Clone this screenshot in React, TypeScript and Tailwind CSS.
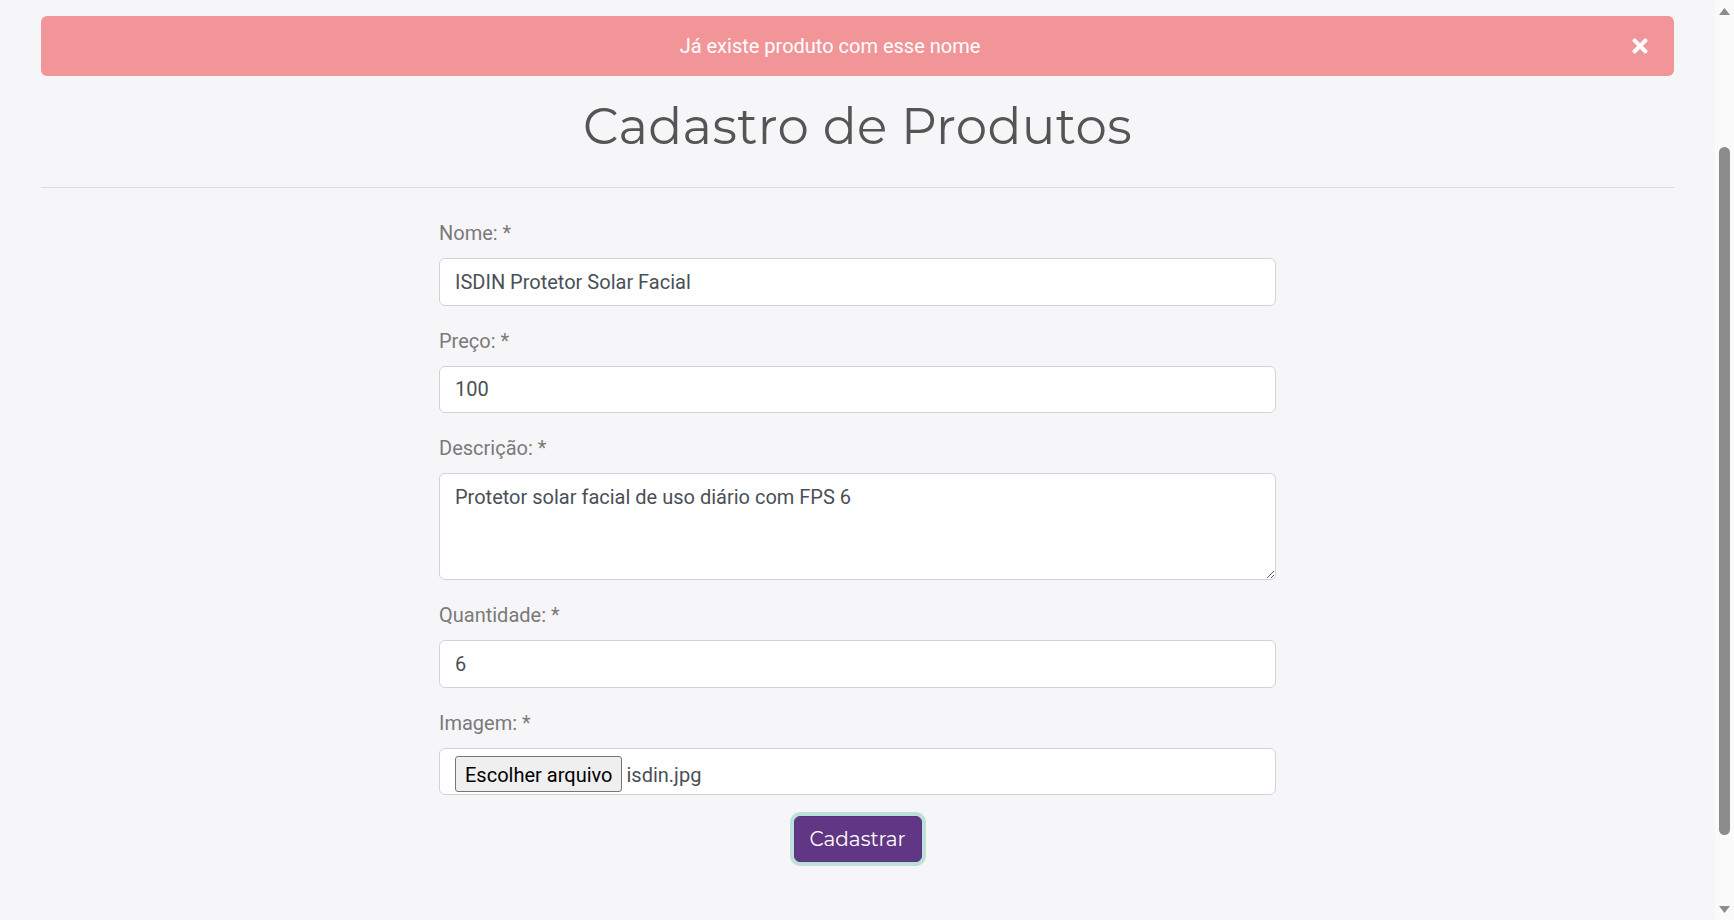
import { FaTimes } from "react-icons/fa";

// Product registration page: error alert, title, divider and a centred form.
// Everything is at the page's 125% zoom, so spacing is odd-looking numbers.

const roboto = "font-['Roboto','Liberation_Sans',sans-serif]";
const display = "font-['Montserrat','Inter','Noto_Sans',sans-serif]";

function Field({ label, children }: { label: string; children: React.ReactNode }) {
  return (
    <div className="mb-[20px] flex flex-col">
      <label className={`${roboto} mb-[10px] text-[20px] leading-[30px] text-[#7a7a7a]`}>{label}</label>
      {children}
    </div>
  );
}

const inputCls = `${roboto} h-[47.5px] w-full rounded-[6px] border border-[#ced4da] bg-white px-[15px] text-[20px] text-[#495057] outline-none`;

function Scrollbar() {
  return (
    <div className="flex h-full w-[19px] shrink-0 flex-col items-center bg-[#fafafa]">
      <div className="flex h-[22px] items-center justify-center">
        <svg width="11" height="7" viewBox="0 0 11 7">
          <path d="M5.5 0 L11 7 L0 7 Z" fill="#8c8c8c" />
        </svg>
      </div>
      <div className="mt-[125px] h-[688px] w-[11px] rounded-full bg-[#8c8c8c]" />
      <div className="flex-1" />
      <div className="flex h-[22px] items-center justify-center">
        <svg width="11" height="7" viewBox="0 0 11 7">
          <path d="M0 0 L11 0 L5.5 7 Z" fill="#8c8c8c" />
        </svg>
      </div>
    </div>
  );
}

export default function App() {
  return (
    <div className="flex h-screen w-full overflow-hidden bg-[#f6f6f8]">
      <main className="min-w-0 flex-1 px-[41px] pt-[16px]">
        <div className="relative flex h-[60px] items-center justify-center rounded-[6px] bg-[#f29599] pl-[25px] pr-[80px]">
          <span className={`${roboto} text-[20px] text-white`}>Já existe produto com esse nome</span>
          <button type="button" className="absolute right-[23px] top-[19px] text-white" aria-label="Fechar">
            <FaTimes size={22} />
          </button>
        </div>

        <h1 className={`${display} mt-[21px] text-center text-[50px] font-normal leading-[60px] tracking-[0.35px] text-[#555555]`}>
          Cadastro de Produtos
        </h1>
        <hr className="mt-[30px] border-t border-[#dcdcdc]" />

        <form className="mx-auto mt-[30px] w-[837px]">
          <Field label="Nome: *">
            <input className={inputCls} defaultValue="ISDIN Protetor Solar Facial" />
          </Field>
          <Field label="Preço: *">
            <input className={inputCls} defaultValue="100" />
          </Field>
          <Field label="Descrição: *">
            <textarea
              className={`${roboto} h-[107px] w-full rounded-[6px] border border-[#ced4da] bg-white px-[15px] py-[7.5px] text-[20px] leading-[30px] text-[#495057] outline-none`}
              defaultValue="Protetor solar facial de uso diário com FPS 6"
            />
          </Field>
          <Field label="Quantidade: *">
            <input className={inputCls} defaultValue="6" />
          </Field>
          <Field label="Imagem: *">
            <div className="flex h-[47.5px] w-full items-start rounded-[6px] border border-[#ced4da] bg-white px-[15px] pt-[7.5px]">
              <div className="flex items-center">
                <span
                  className={`${roboto} flex h-[36px] items-center rounded-[3px] border border-[#767676] bg-[#efefef] px-[9px] pt-[2px] text-[20px] text-black`}
                >
                  Escolher arquivo
                </span>
                <span className={`${roboto} ml-[4px] pt-[2px] text-[20px] text-[#495057]`}>isdin.jpg</span>
              </div>
            </div>
          </Field>
          <div className="flex justify-center pt-[1px]">
            <button
              type="button"
              className={`${display} h-[46px] w-[128px] rounded-[6px] border border-[#5a3380] bg-[#613785] text-[20px] text-white ring-4 ring-[#bde0d8]`}
            >
              Cadastrar
            </button>
          </div>
        </form>
      </main>
      <Scrollbar />
    </div>
  );
}
